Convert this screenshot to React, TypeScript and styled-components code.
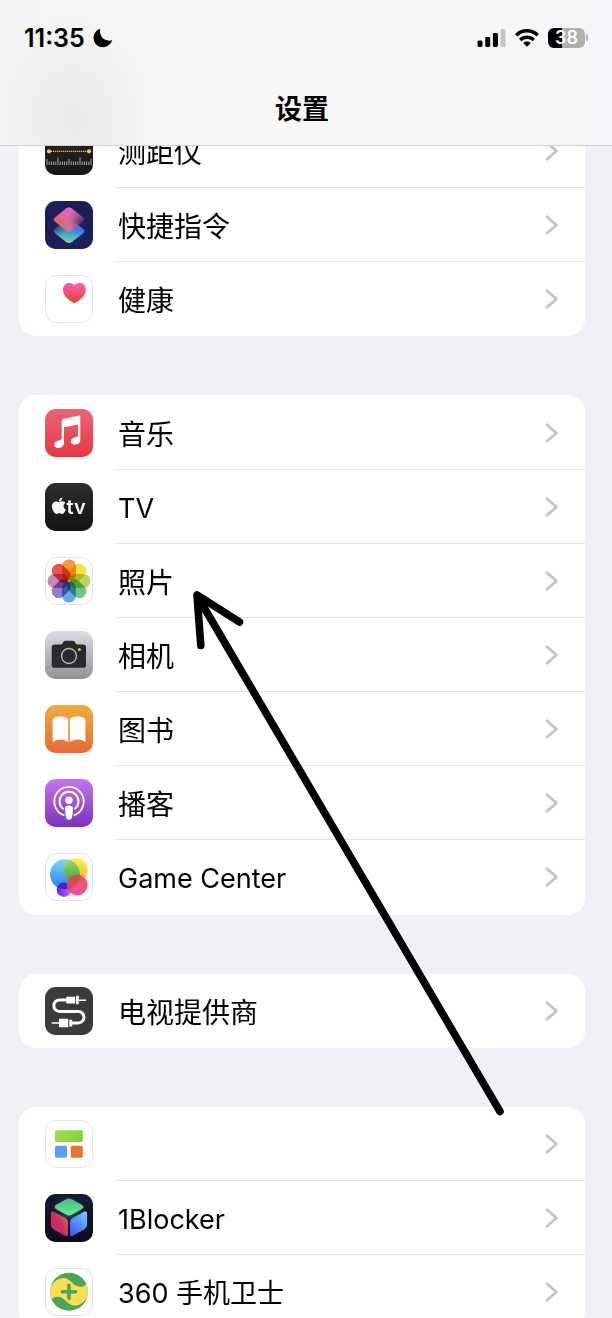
import React from "react";
import styled, { createGlobalStyle } from "styled-components";
import { FaApple } from "react-icons/fa";

const GlobalStyle = createGlobalStyle`
  *, *::before, *::after { box-sizing: border-box; }
  body {
    margin: 0;
    background: #f1f0f6;
    color: #000;
    font-family: Inter, "Noto Sans CJK SC", sans-serif;
  }
`;

const Screen = styled.div`
  position: relative;
  height: 100vh;
  overflow-x: hidden;
  overflow-y: auto;
  scrollbar-width: none;
  background: #f1f0f6;
`;

const Header = styled.header`
  position: sticky;
  top: 0;
  z-index: 2;
  display: flex;
  flex-direction: column;
  height: 146px;
  border-bottom: 1px solid #d3d3d6;
  background:
    radial-gradient(ellipse 80px 110px at 76px 118px, rgba(0, 0, 0, 0.05), rgba(0, 0, 0, 0.035) 35%, rgba(0, 0, 0, 0.01) 75%, transparent),
    linear-gradient(90deg, #f4f4f6 0, #f6f6f6 80px, #f7f7f7 80%, #f5f5f9 100%);
`;

const StatusBar = styled.div`
  display: flex;
  align-items: center;
  justify-content: space-between;
  height: 76px;
  padding: 0 24px;
`;

const StatusSide = styled.div<{ $gap: number }>`
  display: flex;
  align-items: center;
  gap: ${(p) => p.$gap}px;
`;

const Time = styled.time`
  font-size: 25px;
  font-weight: 600;
  line-height: 28px;
`;

const Battery = styled.div`
  display: flex;
  align-items: center;
  gap: 1px;
`;

const BatteryBody = styled.div`
  width: 37px;
  border-radius: 6px;
  background: linear-gradient(90deg, #000 38%, #b0b0b0 38%);
  color: #fff;
  font-size: 18px;
  font-weight: 600;
  line-height: 20px;
  text-align: center;
`;

const BatteryTip = styled.div`
  width: 2px;
  height: 7px;
  border-radius: 0 2px 2px 0;
  background: #b0b0b0;
`;

const Title = styled.h1`
  margin: 0;
  font-size: 27px;
  font-weight: 700;
  line-height: 70px;
  text-align: center;
  padding-right: 8px;
`;

const Main = styled.main`
  display: flex;
  flex-direction: column;
  gap: 59px;
  margin-top: -32px;
  padding: 0 27px 59px 19px;
`;

const Group = styled.ul`
  margin: 0;
  padding: 0;
  list-style: none;
  overflow: hidden;
  border-radius: 17px;
  background: #fff;

  &:has(li:nth-child(4)) {
    padding: 1px 0;
  }
`;

const RowLink = styled.a`
  display: flex;
  gap: 24px;
  height: 74px;
  padding-left: 26px;
  color: inherit;
  text-decoration: none;
`;

const RowBody = styled.span`
  flex: 1;
  display: flex;
  align-items: center;
  justify-content: space-between;
  padding: 0 26px 0 1px;
  border-bottom: 1px solid #e3e3e5;

  li:last-child & {
    border-bottom-color: transparent;
  }
`;

const Label = styled.span<{ $latin?: boolean }>`
  padding-top: 4px;
  font-size: ${(p) => (p.$latin ? 27 : 28)}px;
  line-height: 36px;
  white-space: nowrap;
`;

const AppIcon = styled.svg`
  flex: none;
  align-self: center;
  width: 48px;
  height: 48px;
`;

const PointerArrow = styled.svg`
  position: absolute;
  top: 588px;
  left: 190px;
  z-index: 3;
  width: 320px;
  height: 532px;
  pointer-events: none;
`;

type TileProps = { id: string; from: string; to?: string; outlined?: boolean; children: React.ReactNode };

function Tile({ id, from, to = from, outlined, children }: TileProps) {
  return (
    <AppIcon viewBox="0 0 48 48" aria-hidden="true">
      <defs>
        <linearGradient id={id} x1="0" y1="0" x2="0" y2="1">
          <stop stopColor={from} />
          <stop offset="1" stopColor={to} />
        </linearGradient>
      </defs>
      <rect
        x={outlined ? 0.5 : 0}
        y={outlined ? 0.5 : 0}
        width={outlined ? 47 : 48}
        height={outlined ? 47 : 48}
        rx="10.8"
        fill={`url(#${id})`}
        stroke={outlined ? "#e4e4e6" : "none"}
      />
      {children}
    </AppIcon>
  );
}

function MeasureIcon() {
  return (
    <Tile id="measure" from="#2a2a2a" to="#161618">
      <path d="M4 24.3H44" stroke="#e8bd3c" strokeWidth="1.2" strokeDasharray="1.3 .7" />
      <circle cx="4" cy="24.3" r="2.1" fill="#f6c945" />
      <circle cx="44" cy="24.3" r="2.1" fill="#f6c945" />
      <g stroke="#b8b8b8" strokeWidth=".9">
        {Array.from({ length: 21 }, (_, i) => (
          <path key={i} d={`M${2 + i * 2.2} 38V${i % 10 === 5 ? 30.5 : i % 5 === 0 ? 32 : 34.5}`} />
        ))}
      </g>
    </Tile>
  );
}

function ShortcutsIcon() {
  return (
    <Tile id="shortcuts" from="#1d1d58">
      <defs>
        <linearGradient id="sc-low" x1="0.1" y1="0.1" x2="0.9" y2="0.5">
          <stop stopColor="#27456b" />
          <stop offset=".5" stopColor="#3f93c4" />
          <stop offset="1" stopColor="#2f74ff" />
        </linearGradient>
        <linearGradient id="sc-green" x1="0" y1="0" x2="0" y2="1">
          <stop offset=".45" stopColor="#6be39b" stopOpacity="0" />
          <stop offset="1" stopColor="#6be39b" />
        </linearGradient>
        <linearGradient id="sc-top" x1="0" y1="0.6" x2="1" y2="0.5">
          <stop stopColor="#f0655a" />
          <stop offset=".5" stopColor="#e8709c" />
          <stop offset="1" stopColor="#3d2560" />
        </linearGradient>
        <linearGradient id="sc-pink" x1="0" y1="0" x2="0" y2="1">
          <stop stopColor="#f36ad8" />
          <stop offset=".6" stopColor="#f36ad8" stopOpacity="0" />
        </linearGradient>
      </defs>
      {["url(#sc-low)", "url(#sc-green)"].map((f) => (
        <path key={f} fill={f} d="M21.2 19.2q2.8-2.1 5.6 0l11.2 8.600q2.500 2.200 0 4.400l-11.200 8.800q-2.800 2-5.600 0l-11.200-8.800q-2.500-2.200 0-4.400z" />
      ))}
      <g opacity=".93">
        {["url(#sc-top)", "url(#sc-pink)"].map((f) => (
          <path key={f} fill={f} d="M21.2 7.600q2.800-2 5.600 0l11.200 8.800q2.500 2.200 0 4.400l-11.200 8.800q-2.800 2-5.600 0l-11.200-8.800q-2.500-2.200 0-4.400z" />
        ))}
      </g>
      <path d="M24 18.2L33.5 24.5L26.5 29.5Q24 31 21.4 29.5L14.5 24.5Z" fill="#d06a80" opacity=".35" />
    </Tile>
  );
}

function HealthIcon() {
  return (
    <Tile id="health" from="#fff" outlined>
      <defs>
        <linearGradient id="heart" x1="0" y1="0" x2="0" y2="1">
          <stop stopColor="#f062b6" />
          <stop offset="1" stopColor="#ec4028" />
        </linearGradient>
      </defs>
      <path fill="url(#heart)" d="M29.4 10.2C31.2 8.3 33 8 34.6 8c3.6 0 6.2 2.7 6.2 6.5 0 6-5.4 10.6-11.400 13.800C23.4 25.1 18 20.5 18 14.5 18 10.7 20.6 8 24.2 8c1.600 0 3.400.3 5.200 2.200z" />
    </Tile>
  );
}

function MusicIcon() {
  return (
    <Tile id="music" from="#ec6476" to="#e63742">
      <path fill="#fff" d="M33.7 6.5Q35.3 6.2 35.3 7.8V30.5A4.7 4.2 -15 0 1 30.5 35.6C27.6 36.2 25.9 34.4 25.9 32.6C25.9 29 29 28.5 31.5 28Q33.1 27.6 33.1 26.2V15.4L19 18.3V33.5C19 37 16.8 38.5 14 39C11 39.4 9.2 37.7 9.2 35.8C9.2 32.7 11.8 31.9 14.7 31.3Q16.7 30.9 16.7 29V11.5Q16.7 10.2 18 9.9Z" />
    </Tile>
  );
}

const TvWord = styled.text`
  font-family: Inter, sans-serif;
  font-size: 20px;
  font-weight: 600;
`;

function TvIcon() {
  return (
    <Tile id="tv" from="#2e2e2e" to="#111">
      <FaApple x="4.4" y="13.2" size={19} color="#f5f5f5" />
      <TvWord x="21.5" y="31.3" fill="#f5f5f5">tv</TvWord>
    </Tile>
  );
}

const petals = ["#f29b38", "#f4e23f", "#b6d65c", "#74c390", "#64a8e4", "#8f80c8", "#cc88bb", "#e5574f"];

function PhotosIcon() {
  return (
    <Tile id="photos" from="#fff" outlined>
      <g style={{ isolation: "isolate" }}>
        {petals.map((color, i) => (
          <rect
            key={color}
            x="17.1"
            y="2.6"
            width="13.8"
            height="20.8"
            rx="6.6"
            fill={color}
            transform={`rotate(${i * 45} 24 24)`}
            style={{ mixBlendMode: "multiply" }}
          />
        ))}
      </g>
    </Tile>
  );
}

function CameraIcon() {
  return (
    <Tile id="camera" from="#dedde3" to="#929196">
      <path fill="#2a2a2c" d="M9.5 13.5H15.5Q17 13.5 17.8 12L18.3 11Q19 9.7 20.6 9.7H27.6Q29.2 9.7 29.9 11L30.4 12Q31.2 13.5 32.7 13.5H38.2Q41 13.5 41 16.3V33.9Q41 36.7 38.2 36.7H9.5Q6.7 36.7 6.7 33.9V16.3Q6.7 13.5 9.5 13.5Z" />
      <circle cx="24" cy="25" r="7.5" fill="none" stroke="#b5b5b9" strokeWidth="1.4" />
      <circle cx="34.4" cy="18.4" r="1.5" fill="#f5c33b" />
    </Tile>
  );
}

function BooksIcon() {
  return (
    <Tile id="books" from="#f0ac3c" to="#e86b35">
      <path fill="#fff" d="M7.6 15Q7.6 13.7 8.8 12.9Q12 11.3 15.5 11.3T22 12.9Q23.2 13.7 23.2 15V36.5Q23.2 37.3 22.4 36.7C19 34 12 33.5 8.3 36.7Q7.6 37.3 7.6 36.3Z" />
      <path fill="#fff" d="M24.8 15Q24.8 13.7 26 12.9Q29 11.3 32.5 11.3T39.2 12.9Q40.4 13.7 40.4 15V36.3Q40.4 37.3 39.7 36.7C36 33.5 29 34 25.6 36.7Q24.8 37.3 24.8 36.5Z" />
    </Tile>
  );
}

function PodcastsIcon() {
  return (
    <Tile id="podcasts" from="#c675f2" to="#7a33b8">
      <g fill="none" stroke="#fff" strokeLinecap="round">
        <path d="M18.6 36.2A14.7 14.7 0 1 1 29.4 36.2" strokeWidth="1.8" />
        <path d="M18 29.7A9.5 9.5 0 1 1 30 29.7" strokeWidth="2" />
      </g>
      <circle cx="24" cy="21.3" r="3.7" fill="#fff" />
      <path fill="#fff" d="M20 29.5Q20 26.4 24 26.4T28 29.5Q28 34 27 38.5Q26.6 40.7 24 40.7T21 38.5Q20 34 20 29.5Z" />
    </Tile>
  );
}

function GameCenterIcon() {
  return (
    <Tile id="game" from="#fff" outlined>
      <defs>
        <linearGradient id="g-blue" x1="0.4" y1="0" x2="0.4" y2="1">
          <stop stopColor="#74dcf8" />
          <stop offset="1" stopColor="#2f78f0" />
        </linearGradient>
        <linearGradient id="g-yellow" x1="0" y1="0" x2="0" y2="1">
          <stop stopColor="#fff04a" />
          <stop offset="1" stopColor="#f0b43a" />
        </linearGradient>
        <linearGradient id="g-green" x1="0" y1="0" x2="0" y2="1">
          <stop stopColor="#aadc5c" />
          <stop offset="1" stopColor="#35a55c" />
        </linearGradient>
        <linearGradient id="g-pink" x1="0" y1="0" x2="0" y2="1">
          <stop stopColor="#ee5044" />
          <stop offset="1" stopColor="#ee3f9a" />
        </linearGradient>
        <linearGradient id="g-purple" x1="0" y1="0" x2="1" y2="0">
          <stop stopColor="#6a1cf0" />
          <stop offset="1" stopColor="#c06cf5" />
        </linearGradient>
        <clipPath id="g-clip"><circle cx="20" cy="21.3" r="15" /></clipPath>
      </defs>
      <circle cx="19" cy="36.7" r="7.3" fill="url(#g-purple)" />
      <circle cx="20" cy="21.3" r="15" fill="url(#g-blue)" />
      <circle cx="30.7" cy="17" r="11.9" fill="url(#g-yellow)" />
      <g clipPath="url(#g-clip)">
        <circle cx="30.7" cy="17" r="11.9" fill="url(#g-green)" />
        <circle cx="19" cy="36.7" r="7.3" fill="#4524d8" />
      </g>
      <circle cx="32.3" cy="32" r="10.4" fill="url(#g-pink)" opacity=".92" />
      <g clipPath="url(#g-clip)">
        <circle cx="32.3" cy="32" r="10.4" fill="#c8483c" opacity=".5" />
      </g>
    </Tile>
  );
}

function TvProviderIcon() {
  return (
    <Tile id="provider" from="#3b3b3c">
      <path d="M22 13H14.5A5.5 5.5 0 0 0 14.5 24.4H33.2A5.8 5.8 0 0 1 33.2 36H27" fill="none" stroke="#fff" strokeWidth="3" />
      <path d="M34 13.2H41M6.7 36H14" stroke="#fff" strokeWidth="1.4" />
      <path fill="#fff" d="M21.3 9.8H30.2V16.4H21.3ZM31 8.7H33.8V17.3H31ZM14 31.8H23.2V40.3H14ZM24.2 32.7H27.2V39.4H24.2Z" />
    </Tile>
  );
}

function BlocksIcon() {
  return (
    <Tile id="blocks" from="#fff" outlined>
      <defs>
        <linearGradient id="b-green" x1="0" y1="0" x2="1" y2="0.4">
          <stop stopColor="#a6e04a" />
          <stop offset="1" stopColor="#84d23e" />
        </linearGradient>
      </defs>
      <rect x="10" y="10.3" width="27.8" height="11.7" rx="1.5" fill="url(#b-green)" />
      <rect x="10" y="25.7" width="12" height="12" rx="1.5" fill="#5a9ff7" />
      <rect x="25.8" y="25.7" width="12" height="12" rx="1.5" fill="#e8752f" />
    </Tile>
  );
}

function OneBlockerIcon() {
  return (
    <Tile id="oneblocker" from="#151a35" to="#0b0c1c">
      <defs>
        <radialGradient id="ob-glow">
          <stop stopColor="#1f6a60" />
          <stop offset="1" stopColor="#151a35" stopOpacity="0" />
        </radialGradient>
        <linearGradient id="ob-top" x1="0" y1="0" x2="0" y2="1">
          <stop stopColor="#46b886" />
          <stop offset="1" stopColor="#66f08e" />
        </linearGradient>
        <linearGradient id="ob-left" x1="1" y1="0" x2="0" y2="0.8">
          <stop stopColor="#e8705c" />
          <stop offset=".5" stopColor="#c8305f" />
          <stop offset="1" stopColor="#e0206a" />
        </linearGradient>
        <linearGradient id="ob-right" x1="0.8" y1="0" x2="0.2" y2="1">
          <stop stopColor="#70c4ff" />
          <stop offset="1" stopColor="#3c5cf2" />
        </linearGradient>
      </defs>
      <circle cx="24" cy="17" r="19" fill="url(#ob-glow)" />
      <path fill="url(#ob-top)" d="M21.2 5.2Q24 3.800 26.8 5.2L37.2 11.1Q39.600 13 37.2 14.9L26.8 20.800Q24 22.400 21.2 20.800L10.8 14.9Q8.400 13 10.8 11.1Z" />
      <path fill="url(#ob-left)" d="M6 19.5Q6 16.2 9 17.7L20.2 23.800Q23 25.500 23 28.5V40Q23 43.300 20 41.800L8.500 35.300Q6 33.800 6 31Z" />
      <path fill="url(#ob-right)" d="M42 19.500Q42 16.200 39 17.700L27.800 23.800Q25 25.500 25 28.500V40Q25 43.300 28 41.800L39.500 35.300Q42 33.800 42 31Z" />
    </Tile>
  );
}

function GuardIcon() {
  return (
    <Tile id="guard" from="#fff" outlined>
      <circle cx="24" cy="23.8" r="19" fill="#4ca457" />
      <path fill="#f8de55" d="M5.4 20C8 13 14 9.5 19 10C26 10.500 28 19 36 18.8Q40 18.500 41.300 15.800A19 19 0 0 1 42.6 27.6C40 34.6 34 38.1 29 37.6C22 37.1 20 28.6 12 28.8Q8 29.1 6.700 31.800A19 19 0 0 1 5.400 20Z" />
      <path d="M24 17.2V30.4M17.4 23.8H30.6" stroke="#4ca457" strokeWidth="3.6" strokeLinecap="round" />
    </Tile>
  );
}

function Chevron() {
  return (
    <svg width="14" height="20" viewBox="0 0 14 20" fill="none" aria-hidden="true">
      <path d="M2 1.8L11.4 10L2 18.2" stroke="#c4c4c7" strokeWidth="2.8" strokeLinecap="round" strokeLinejoin="round" />
    </svg>
  );
}

type Item = { label: string; icon: () => React.ReactElement; latin?: boolean };

const groups: Item[][] = [
  [
    { label: "测距仪", icon: MeasureIcon },
    { label: "快捷指令", icon: ShortcutsIcon },
    { label: "健康", icon: HealthIcon },
  ],
  [
    { label: "音乐", icon: MusicIcon },
    { label: "TV", icon: TvIcon, latin: true },
    { label: "照片", icon: PhotosIcon },
    { label: "相机", icon: CameraIcon },
    { label: "图书", icon: BooksIcon },
    { label: "播客", icon: PodcastsIcon },
    { label: "Game Center", icon: GameCenterIcon, latin: true },
  ],
  [{ label: "电视提供商", icon: TvProviderIcon }],
  [
    { label: "", icon: BlocksIcon },
    { label: "1Blocker", icon: OneBlockerIcon, latin: true },
    { label: "360 手机卫士", icon: GuardIcon, latin: true },
  ],
];

function SettingsRow({ label, icon: Icon, latin }: Item) {
  return (
    <li>
      <RowLink href="#">
        <Icon />
        <RowBody>
          <Label $latin={latin}>{label}</Label>
          <Chevron />
        </RowBody>
      </RowLink>
    </li>
  );
}

export default function App() {
  return (
    <Screen>
      <GlobalStyle />
      <Header>
        <StatusBar>
          <StatusSide $gap={8}>
            <Time>11:35</Time>
            <svg width="20" height="20" viewBox="0 0 20 20" aria-hidden="true">
              <path d="M7.3.8C5.8 7.5 10.5 14.2 19.3 12.3C17.6 16.7 14 19.2 10 19.2C4.6 19.2.6 15 .6 9.900C.6 5.6 3.3 2.1 7.3.8Z" />
            </svg>
          </StatusSide>
          <StatusSide $gap={9}>
            <svg width="29" height="20" viewBox="0 0 29 20" aria-hidden="true">
              <rect x="0.5" y="12.5" width="5" height="6.5" rx="1.4" />
              <rect x="8.2" y="9" width="5" height="10" rx="1.4" />
              <rect x="15.9" y="5" width="5" height="14" rx="1.4" />
              <rect x="23.6" y="1" width="5" height="18" rx="1.4" fill="#c6c6c6" />
            </svg>
            <svg width="24" height="20" viewBox="0 0 24 20" aria-hidden="true">
              <g fill="none" stroke="#000" strokeWidth="3.4">
                <path d="M1.2 7.3C7.2 1.2 16.8 1.2 22.8 7.3" />
                <path d="M5.2 11.9C9 8.300 15 8.300 18.8 11.9" />
              </g>
              <path d="M8.3 15C10.4 13.1 13.6 13.1 15.7 15L12 18.8Z" />
            </svg>
            <Battery>
              <BatteryBody>38</BatteryBody>
              <BatteryTip />
            </Battery>
          </StatusSide>
        </StatusBar>
        <Title>设置</Title>
      </Header>
      <Main>
        {groups.map((items, i) => (
          <Group key={i}>
            {items.map((item) => (
              <SettingsRow key={item.label} {...item} />
            ))}
          </Group>
        ))}
      </Main>
      <PointerArrow viewBox="0 0 320 532" aria-hidden="true">
        <path d="M310 523.5L7 7.5M49.5 34L7 7L10.8 57.5" fill="none" stroke="#000" strokeWidth="7.6" strokeLinecap="round" strokeLinejoin="round" />
      </PointerArrow>
    </Screen>
  );
}
